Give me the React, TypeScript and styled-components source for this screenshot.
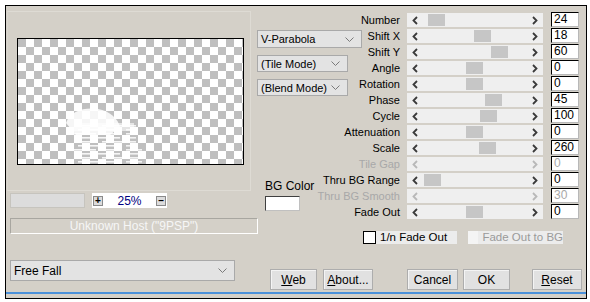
import React from "react";
import styled, { createGlobalStyle } from "styled-components";

const GlobalStyle = createGlobalStyle`
  body {
    margin: 0;
    background: #ffffff;
    font-family: "Liberation Sans", Arial, sans-serif;
    font-size: 11px;
    color: #000;
  }
`;

// 全体の枠
const Frame = styled.div`
  margin: 5px 0 0 5px;
  width: 582px;
  height: 294px;
  box-sizing: border-box;
  border: 1px solid #000;
  background: #d4d0c8;
`;

const Panel = styled.div`
  height: 288px;
  box-sizing: border-box;
  border-bottom: 2px solid #4a90d9;
  display: flex;
`;

// 左側
const LeftCol = styled.div`
  width: 251px;
  display: flex;
  flex-direction: column;
`;

const GroupBox = styled.div`
  margin: 5px 0 0 1px;
  width: 244px;
  height: 180px;
  box-sizing: border-box;
  border: 1px solid #dedbd4;
  border-left-color: #d8d5ce;
  padding: 26px 0 0 9px;
`;

const Preview = styled.div`
  position: relative;
  width: 227px;
  height: 127px;
  box-sizing: border-box;
  border: 1px solid #000;
  background-color: #fff;
  background-image: conic-gradient(#fff 25%, #bfbfbf 0 50%, #fff 0 75%, #bfbfbf 0);
  background-size: 16px 16px;
  background-position: 0 0;
`;

const Blob = styled.svg`
  position: absolute;
  left: 0;
  top: 0;
`;

const ZoomRow = styled.div`
  margin: 2px 0 0 4px;
  display: flex;
  gap: 7px;
  height: 15px;
`;

const ZoomBar = styled.div`
  width: 75px;
  box-sizing: border-box;
  border: 1px solid #c6c4be;
  background: #dcdcdc;
`;

const ZoomBox = styled.div`
  width: 75px;
  background: #fff;
  display: flex;
  align-items: center;
  padding: 0 1px;
  box-sizing: border-box;
`;

const TinyButton = styled.div`
  width: 10px;
  height: 10px;
  box-sizing: border-box;
  border: 1px solid #8a8a8a;
  background: #dcdcdc;
  display: flex;
  align-items: center;
  justify-content: center;
  font-size: 10px;
  font-weight: bold;
  line-height: 1;
`;

const ZoomText = styled.span`
  flex: 1;
  text-align: center;
  color: #000080;
  font-size: 12px;
`;

const HostBox = styled.div`
  margin: 10px 0 0 4px;
  width: 248px;
  height: 16px;
  box-sizing: border-box;
  border: 1px solid #a8a6a0;
  border-right-color: #fff;
  border-bottom-color: #fff;
  color: #f6f6f6;
  text-align: center;
  line-height: 14px;
  font-size: 12px;
`;

const Combo = styled.div<{ $w: number; $h: number }>`
  width: ${(p) => p.$w}px;
  height: ${(p) => p.$h}px;
  box-sizing: border-box;
  border: 1px solid #a9a9a9;
  background: #e3e3e3;
  display: flex;
  align-items: center;
  justify-content: space-between;
  padding: 0 7px 0 3px;
  white-space: nowrap;
  font-size: 11px;
`;

const FallCombo = styled(Combo)`
  margin: 26px 0 0 4px;
  font-size: 12px;
`;

// 右側
const RightArea = styled.div`
  flex: 1;
  display: flex;
  flex-direction: column;
  padding-top: 7px;
`;

const TopSection = styled.div`
  display: flex;
`;

const MidCol = styled.div`
  width: 105px;
  display: flex;
  flex-direction: column;
  gap: 7px;
  padding-top: 17px;
`;

const BgColor = styled.div`
  margin: 76px 0 0 8px;
  display: flex;
  flex-direction: column;
  gap: 3px;
  font-size: 12px;
`;

const Swatch = styled.div`
  width: 35px;
  height: 15px;
  box-sizing: border-box;
  background: #fff;
  border: 1px solid #404040;
  border-right-color: #c0c0c0;
  border-bottom-color: #c0c0c0;
`;

const ParamGrid = styled.div`
  display: grid;
  grid-template-columns: 38px 136px 29px;
  column-gap: 7px;
  grid-auto-rows: 14px;
  row-gap: 2px;
`;

const Label = styled.div<{ $off?: boolean }>`
  display: flex;
  justify-content: flex-end;
  align-items: center;
  white-space: nowrap;
  font-size: 11px;
  color: ${(p) => (p.$off ? "#a8a8a8" : "#000")};
`;

const Track = styled.div`
  position: relative;
  background: #efefef;
  display: flex;
  align-items: center;
  justify-content: space-between;
  padding: 0 5px;
`;

const Thumb = styled.div`
  position: absolute;
  top: 1px;
  width: 17px;
  height: 12px;
  background: #c6c6c6;
`;

const ValueBox = styled.div<{ $off?: boolean }>`
  margin-left: 1px;
  box-sizing: border-box;
  height: 15px;
  margin-top: -1px;
  background: #fff;
  border: 1px solid #000;
  border-right-color: #b8b8b8;
  border-bottom-color: #b8b8b8;
  padding-left: 2px;
  line-height: 13px;
  font-size: 12px;
  color: ${(p) => (p.$off ? "#a8a8a8" : "#000")};
`;

const CheckRow = styled.div`
  margin: 12px 0 0 106px;
  display: flex;
  gap: 11px;
  height: 13px;
`;

const CheckItem = styled.div<{ $off?: boolean; $w: number }>`
  display: flex;
  width: ${(p) => p.$w}px;
  white-space: nowrap;
  background: #ececec;
  color: ${(p) => (p.$off ? "#9a9a9a" : "#000")};
  font-size: 11.5px;
  line-height: 13px;
`;

const CheckBox = styled.div<{ $off?: boolean }>`
  width: 13px;
  height: 13px;
  box-sizing: border-box;
  border: 1px solid ${(p) => (p.$off ? "#f4f4f4" : "#000")};
  background: ${(p) => (p.$off ? "#f4f4f4" : "#fff")};
  margin-right: 4px;
`;

const ButtonRow = styled.div`
  margin: 25px 0 0 13px;
  display: flex;
  height: 21px;
`;

const Button = styled.div<{ $w: number; $gap: number }>`
  width: ${(p) => p.$w}px;
  margin-left: ${(p) => p.$gap}px;
  box-sizing: border-box;
  border: 1px solid #adadad;
  box-shadow: inset 1px 1px 0 #f4f4f4;
  background: #e1e1e1;
  display: flex;
  align-items: center;
  justify-content: center;
  font-size: 12px;
  u {
    text-decoration: underline;
  }
`;

const Chevron = ({ dir, off }: { dir: "l" | "r"; off?: boolean }) => (
  <svg width="6" height="9" viewBox="0 0 6 9">
    <path
      d={dir === "l" ? "M5 1 L1.5 4.5 L5 8" : "M1 1 L4.5 4.5 L1 8"}
      fill="none"
      stroke={off ? "#b8b8b8" : "#3a3a3a"}
      strokeWidth="1.8"
    />
  </svg>
);

const Caret = () => (
  <svg width="9" height="5" viewBox="0 0 9 5">
    <path d="M0.5 0.5 L4.5 4.5 L8.5 0.5" fill="none" stroke="#7a7a7a" strokeWidth="1" />
  </svg>
);

type Param = { label: string; value: string; pos?: number; off?: boolean };

const params: Param[] = [
  { label: "Number", value: "24", pos: 21 },
  { label: "Shift X", value: "18", pos: 67 },
  { label: "Shift Y", value: "60", pos: 84 },
  { label: "Angle", value: "0", pos: 59 },
  { label: "Rotation", value: "0", pos: 59 },
  { label: "Phase", value: "45", pos: 78 },
  { label: "Cycle", value: "100", pos: 73 },
  { label: "Attenuation", value: "0", pos: 59 },
  { label: "Scale", value: "260", pos: 72 },
  { label: "Tile Gap", value: "0", off: true },
  { label: "Thru BG Range", value: "0", pos: 17 },
  { label: "Thru BG Smooth", value: "30", off: true },
  { label: "Fade Out", value: "0", pos: 59 },
];

// プレビューの白いかたまり
const PreviewBlob = () => {
  const lines = [];
  for (let i = 0; i < 11; i++) {
    const y = 86 + i * 4;
    lines.push(
      <rect key={"a" + i} x={56 + (i % 2) * 4} y={y} width={22} height={1.6} fill="#fff" opacity={0.85} />,
      <rect key={"b" + i} x={84 - (i % 2) * 2} y={y} width={20} height={1.6} fill="#fff" opacity={0.85} />,
      <rect key={"c" + i} x={108} y={y} width={10 + (i > 5 ? 6 : 0)} height={1.6} fill="#fff" opacity={0.8} />
    );
  }
  return (
    <Blob width="225" height="125" viewBox="0 0 225 125">
      <path d="M48 84 C52 72 66 68 80 70 C92 72 100 80 102 88 L92 96 L58 96 Z" fill="#fff" opacity={0.85} />
      <rect x="56" y="84" width="60" height="8" fill="#fff" opacity={0.6} />
      {lines}
    </Blob>
  );
};

const App = () => {
  return (
    <>
      <GlobalStyle />
      <Frame>
        <Panel>
          <LeftCol>
            <GroupBox>
              <Preview>
                <PreviewBlob />
              </Preview>
            </GroupBox>
            <ZoomRow>
              <ZoomBar />
              <ZoomBox>
                <TinyButton>+</TinyButton>
                <ZoomText>25%</ZoomText>
                <TinyButton>–</TinyButton>
              </ZoomBox>
            </ZoomRow>
            <HostBox>Unknown Host ("9PSP")</HostBox>
            <FallCombo $w={225} $h={21}>
              <span>Free Fall</span>
              <Caret />
            </FallCombo>
          </LeftCol>
          <RightArea>
            <TopSection>
              <MidCol>
                <Combo $w={105} $h={18}>
                  <span>V-Parabola</span>
                  <Caret />
                </Combo>
                <Combo $w={91} $h={17}>
                  <span>(Tile Mode)</span>
                  <Caret />
                </Combo>
                <Combo $w={91} $h={17}>
                  <span>(Blend Mode)</span>
                  <Caret />
                </Combo>
                <BgColor>
                  <span>BG Color</span>
                  <Swatch />
                </BgColor>
              </MidCol>
              <ParamGrid>
                {params.map((p) => (
                  <React.Fragment key={p.label}>
                    <Label $off={p.off}>{p.label}</Label>
                    <Track>
                      <Chevron dir="l" off={p.off} />
                      {p.pos !== undefined && <Thumb style={{ left: p.pos }} />}
                      <Chevron dir="r" off={p.off} />
                    </Track>
                    <ValueBox $off={p.off}>{p.value}</ValueBox>
                  </React.Fragment>
                ))}
              </ParamGrid>
            </TopSection>
            <CheckRow>
              <CheckItem $w={94}>
                <CheckBox />
                1/n Fade Out
              </CheckItem>
              <CheckItem $w={95} $off>
                <CheckBox $off />
                Fade Out to BG
              </CheckItem>
            </CheckRow>
            <ButtonRow>
              <Button $w={47} $gap={0}>
                <span><u>W</u>eb</span>
              </Button>
              <Button $w={50} $gap={6}>
                <span><u>A</u>bout...</span>
              </Button>
              <Button $w={51} $gap={34}>Cancel</Button>
              <Button $w={47} $gap={5}>OK</Button>
              <Button $w={50} $gap={22}>
                <span><u>R</u>eset</span>
              </Button>
            </ButtonRow>
          </RightArea>
        </Panel>
      </Frame>
    </>
  );
};

export default App;
